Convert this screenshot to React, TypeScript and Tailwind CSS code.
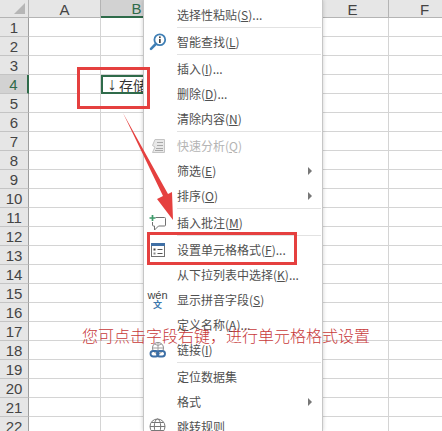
import React from 'react';

const columns = ['A', 'B', 'C', 'D', 'E', 'F'];
const rows = Array.from({ length: 22 }, (_, i) => i + 1);

function SearchInfoIcon() {
  return (
    <svg width="18" height="18" viewBox="0 0 18 18">
      <circle cx="10.8" cy="6.8" r="5.4" fill="#fff" stroke="#3f7fb5" strokeWidth="1.8" />
      <rect x="10" y="6" width="1.7" height="4" fill="#444" />
      <rect x="10" y="3.4" width="1.7" height="1.7" fill="#444" />
      <path d="M6.8 11 L2 15.8" stroke="#3f7fb5" strokeWidth="2.6" strokeLinecap="round" />
    </svg>
  );
}

function QuickAnalysisIcon() {
  return (
    <svg width="16" height="16" viewBox="0 0 16 16" fill="none" stroke="#c4c4c4">
      <path d="M5 1.5 H14.5 V14.5 H2.5 L5 9 L2.5 7.5 Z" fill="#e8e8e8" />
      <path d="M7 4.5 H13 M7 7.5 H13 M6 10.5 H13 M5 12.5 H13" stroke="#a8a8a8" />
    </svg>
  );
}

function CommentIcon() {
  return (
    <svg width="18" height="18" viewBox="0 0 18 18" fill="none">
      <path d="M6.5 3.5 H15.5 Q16.5 3.5 16.5 4.5 V11 Q16.5 12 15.5 12 H9.5 L5.5 16 V12 H4.5 Q3.5 12 3.5 11 V8" stroke="#707070" />
      <path d="M3.5 1 V7 M0.5 4 H6.5" stroke="#3f9a6b" strokeWidth="1.7" />
    </svg>
  );
}

function FormatCellsIcon() {
  return (
    <svg width="16" height="16" viewBox="0 0 16 16" fill="none">
      <rect x="1.5" y="1.5" width="13" height="13" fill="#fff" stroke="#707070" />
      <rect x="1" y="1" width="14" height="3" fill="#3f6fa5" />
      <rect x="3.5" y="6.5" width="2" height="2" fill="#444" />
      <rect x="3.5" y="10.5" width="2" height="2" fill="#888" />
      <path d="M7.5 7.5 H12.5 M7.5 11.5 H12.5" stroke="#555" />
    </svg>
  );
}

function LinkIcon() {
  return (
    <svg width="18" height="18" viewBox="0 0 18 18" fill="none">
      <circle cx="9" cy="7" r="5.5" stroke="#888" />
      <path d="M3.5 7 H14.5 M9 1.5 V12.5 M5.5 3 Q9 6 12.5 3" stroke="#a0a0a0" />
      <rect x="1.5" y="10" width="8" height="5.5" rx="2.7" stroke="#3d6fa5" strokeWidth="1.9" />
      <rect x="8" y="10" width="8" height="5.5" rx="2.7" stroke="#3d6fa5" strokeWidth="1.9" />
    </svg>
  );
}

function GlobeIcon() {
  return (
    <svg width="17" height="17" viewBox="0 0 17 17" fill="none" stroke="#777">
      <circle cx="8.5" cy="8.5" r="7.5" />
      <ellipse cx="8.5" cy="8.5" rx="3.2" ry="7.5" />
      <path d="M1 8.5 H16 M2.5 4.5 H14.5 M2.5 12.5 H14.5" />
    </svg>
  );
}

function WenIcon() {
  return (
    <div className="flex flex-col items-center leading-none">
      <span className="text-[11px] leading-[10px] text-[#444] font-['Liberation_Sans',sans-serif]">wén</span>
      <span className="text-[9px] leading-[10px] font-bold text-[#3d78ad] font-['Noto_Sans_CJK_SC',sans-serif]">文</span>
    </div>
  );
}

interface MenuEntry {
  label?: string;
  hotkey?: string;
  tail?: string;
  icon?: React.ReactNode;
  arrow?: boolean;
  disabled?: boolean;
  separator?: boolean;
}

const menu: MenuEntry[] = [
  { label: '选择性粘贴', hotkey: 'S', tail: '...' },
  { separator: true },
  { label: '智能查找', hotkey: 'L', icon: <SearchInfoIcon /> },
  { separator: true },
  { label: '插入', hotkey: 'I', tail: '...' },
  { label: '删除', hotkey: 'D', tail: '...' },
  { label: '清除内容', hotkey: 'N' },
  { separator: true },
  { label: '快速分析', hotkey: 'Q', icon: <QuickAnalysisIcon />, disabled: true },
  { label: '筛选', hotkey: 'E', arrow: true },
  { label: '排序', hotkey: 'O', arrow: true },
  { separator: true },
  { label: '插入批注', hotkey: 'M', icon: <CommentIcon /> },
  { separator: true },
  { label: '设置单元格格式', hotkey: 'F', tail: '...', icon: <FormatCellsIcon /> },
  { label: '从下拉列表中选择', hotkey: 'K', tail: '...' },
  { label: '显示拼音字段', hotkey: 'S', icon: <WenIcon /> },
  { label: '定义名称', hotkey: 'A', tail: '...' },
  { label: '链接', hotkey: 'I', icon: <LinkIcon /> },
  { separator: true },
  { label: '定位数据集' },
  { label: '格式', arrow: true },
  { label: '跳转规则', icon: <GlobeIcon /> },
];

function ContextMenu() {
  return (
    <div className="absolute left-[143px] top-0 w-[180px] h-[431px] overflow-hidden bg-white border-x border-[#c6c6c6] pt-[2px] shadow-[0_0_4px_rgba(0,0,0,0.2)] font-['Noto_Sans_CJK_SC',sans-serif] text-[12px]">
      {menu.map((item, i) =>
        item.separator ? (
          <div key={i} className="h-[2px] ml-[33px] mr-[1px] bg-[#e2e2e2] [background-clip:content-box] pb-[1px]" />
        ) : (
          <div key={i} className={`flex items-center h-[25px] shrink-0 ${item.disabled ? 'text-[#b4b4b4]' : 'text-[#505050]'}`}>
            <div className="w-[27px] mr-[6px] flex justify-center items-center shrink-0">{item.icon}</div>
            <span className="whitespace-nowrap">
              {item.label}
              {item.hotkey && (
                <>
                  (<span className="underline">{item.hotkey}</span>)
                </>
              )}
              {item.tail}
            </span>
            {item.arrow && (
              <div className="ml-auto mr-[10px] w-0 h-0 border-y-[4px] border-y-transparent border-l-[4px] border-l-[#777]" />
            )}
          </div>
        )
      )}
    </div>
  );
}

export default function App() {
  return (
    <div className="relative w-[442px] h-[431px] overflow-hidden bg-white font-['Liberation_Sans',sans-serif]">
      {/* header */}
      <div className="flex h-[18px]">
        <div className="w-[29px] shrink-0 bg-[#e6e6e6] border-r border-b border-[#b4b4b4] relative">
          <div className="absolute right-[3px] bottom-[3px] w-0 h-0 border-l-[11px] border-l-transparent border-b-[11px] border-b-[#b6b6b6]" />
        </div>
        {columns.map((c) => (
          <div
            key={c}
            className={`w-[72px] shrink-0 flex items-center justify-center pt-[1px] text-[15px] leading-none border-r ${
              c === 'B'
                ? 'bg-[#d2d2d2] text-[#2f6b4a] border-b-2 border-b-[#2f6b4a] border-r-[#b4b4b4]'
                : 'bg-[#e6e6e6] text-[#444] border-b border-b-[#b4b4b4] border-r-[#b4b4b4]'
            }`}
          >
            {c}
          </div>
        ))}
      </div>
      {/* rows */}
      {rows.map((r) => (
        <div key={r} className="flex h-[19px]">
          <div
            className={`w-[29px] shrink-0 flex items-center justify-center pt-[1px] text-[15px] leading-none border-b border-b-[#c4c4c4] ${
              r === 4
                ? 'bg-[#d2d2d2] text-[#2f6b4a] border-r-2 border-r-[#2f6b4a]'
                : 'bg-[#e6e6e6] text-[#444] border-r border-r-[#9e9e9e]'
            }`}
          >
            {r}
          </div>
          {columns.map((c) =>
            r === 4 && c === 'B' ? (
              <div
                key={c}
                className="w-[72px] shrink-0 border-2 border-[#2f6b4a] flex items-center pl-[3px] text-[14px] leading-none text-[#333] whitespace-nowrap overflow-hidden font-['Noto_Sans_CJK_SC',sans-serif]"
              >
                <span className="w-[12px] mr-[1px] shrink-0 flex justify-center text-[18px] leading-[15px] font-['Liberation_Sans',sans-serif]">↓</span>
                存储过程
              </div>
            ) : (
              <div key={c} className="w-[72px] shrink-0 border-r border-b border-[#d4d4d4]" />
            )
          )}
        </div>
      ))}

      <ContextMenu />

      {/* red annotations */}
      <div className="absolute left-[77px] top-[67px] w-[73px] h-[42px] border-[3px] border-[#e5403f]" />
      <div className="absolute left-[147px] top-[232px] w-[150px] h-[33px] border-[3px] border-[#e5403f]" />
      <svg className="absolute left-[120px] top-[110px]" width="60" height="115" viewBox="0 0 60 115">
        <path d="M3 3 L43 86 L37 89 L53 110 L52 82 L48 84 Z" fill="#e5403f" />
      </svg>
      <div className="absolute left-[82px] top-[324px] text-[16px] leading-[22px] text-[#c8393a] whitespace-nowrap font-light font-['Noto_Sans_CJK_SC',sans-serif]">
        您可点击字段右键，进行单元格格式设置
      </div>
    </div>
  );
}
